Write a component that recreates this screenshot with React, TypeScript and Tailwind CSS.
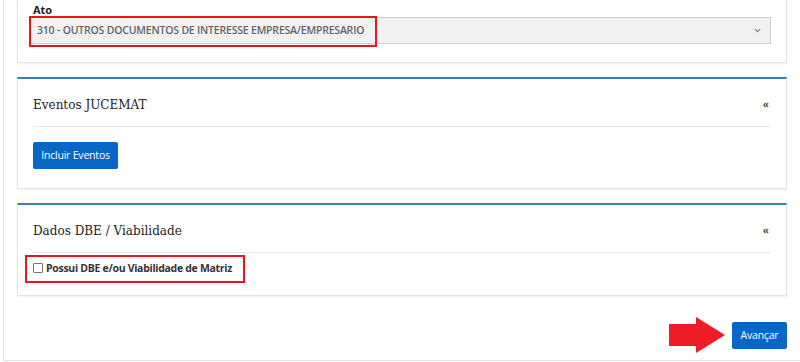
import { ChevronDown } from "lucide-react"

const sans = { fontFamily: '"Open Sans", "Liberation Sans", sans-serif' }

function Card({ title, children }: { title: string; children: React.ReactNode }) {
  return (
    <div className="mt-[14px] border border-t-2 border-[#e4e4e4] border-t-[#3b7cc4] bg-white shadow-[0_1px_2px_rgba(0,0,0,0.07)]">
      <div className="mx-[15px] flex h-[48px] items-center justify-between border-b border-[#e8e8e8] pt-[4px]">
        <h2 className="font-['DejaVu_Serif',serif] text-[12px] text-[#222]">{title}</h2>
        <span className="mr-[2px] text-[10px] font-bold text-[#555]">«</span>
      </div>
      {children}
    </div>
  )
}

function ArrowRight() {
  return (
    <svg width="57" height="36" viewBox="0 0 57 36" className="mr-[6px]">
      <path d="M0 7 H27 V0 L56 18 L27 36 V29 H0 Z" fill="#ee1c25" />
    </svg>
  )
}

export default function App() {
  return (
    <div className="h-[362px] overflow-hidden bg-white" style={sans}>
      <div className="ml-[3px] h-[361px] border-b border-l border-[#e6e6e6] px-[13px]">
        <div className="border border-t-0 border-[#e4e4e4] bg-white px-[15px] pb-[18px] pt-[2px] shadow-[0_1px_2px_rgba(0,0,0,0.07)]">
          <label className="block h-[15px] text-[11px] font-bold leading-[15px] text-[#222]">Ato</label>
          <div className="relative -ml-[3px]">
            <div className="flex h-[27px] items-center justify-between border border-[#cfcfcf] bg-[#f1f1f1] pl-[6px] pr-[8px]">
              <span className="text-[10.5px] font-semibold tracking-[-0.2px] text-[#666]">
                310 - OUTROS DOCUMENTOS DE INTERESSE EMPRESA/EMPRESARIO
              </span>
              <ChevronDown className="size-[9px] text-[#777]" strokeWidth={3} />
            </div>
            <div className="pointer-events-none absolute -left-[1px] -top-[1px] h-[31px] w-[348px] border-2 border-[#e8141f]" />
          </div>
        </div>

        <Card title="Eventos JUCEMAT">
          <div className="px-[15px] pb-[19px] pt-[14px]">
            <button className="h-[27px] w-[85px] rounded-[2px] bg-[#0866c6] text-[10.5px] tracking-[-0.2px] text-white">
              Incluir Eventos
            </button>
          </div>
        </Card>

        <Card title="Dados DBE / Viabilidade">
          <div className="px-[15px] pb-[17px] pt-[5px]">
            <div className="relative flex h-[20px] items-center">
              <span className="mr-[3px] size-[10px] rounded-[1px] border border-[#777] bg-white" />
              <span className="text-[10.5px] font-bold tracking-[-0.3px] text-[#333]">
                Possui DBE e/ou Viabilidade de Matriz
              </span>
              <div className="pointer-events-none absolute -left-[8px] -top-[3px] h-[28px] w-[220px] border-2 border-[#e8141f]" />
            </div>
          </div>
        </Card>

        <div className="mt-[21px] flex items-center justify-end">
          <ArrowRight />
          <button className="h-[27px] w-[55px] rounded-[2px] bg-[#0866c6] text-[10.5px] tracking-[-0.2px] text-white">
            Avançar
          </button>
        </div>
      </div>
    </div>
  )
}
